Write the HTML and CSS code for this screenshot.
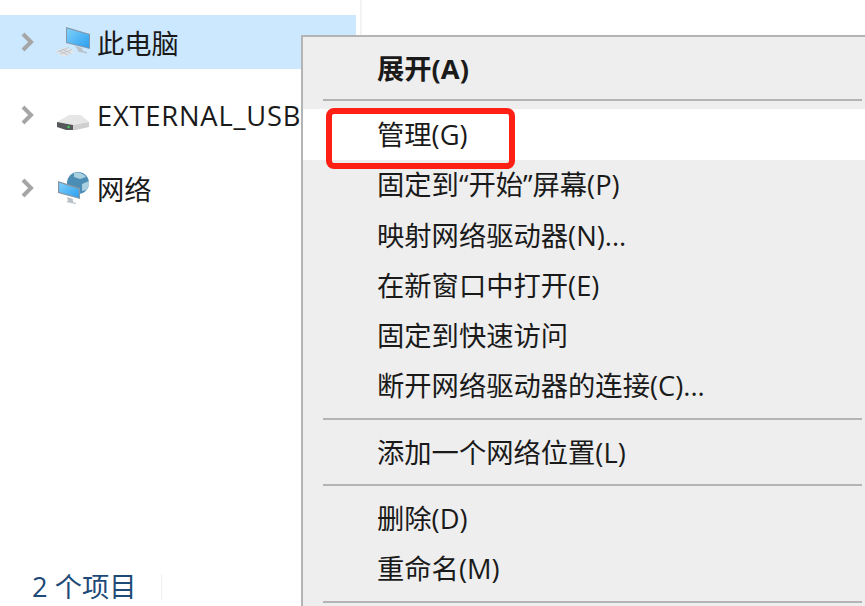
FILE: index.html
```html
<!DOCTYPE html>
<html lang="zh-CN">
<head>
  <meta charset="UTF-8">
  <title>此电脑</title>
  <link rel="stylesheet" href="styles.css">
</head>
<body>
  <div class="window">
    <div class="sidebar">
      <div class="tree">
        <div class="tree-row selected">
          <svg class="chevron" viewBox="0 0 14 22"><path d="M3 3l8 8-8 8" /></svg>
          <svg class="icon" viewBox="0 0 36 32">
            <defs>
              <linearGradient id="screen" x1="0" y1="0" x2="1" y2="1">
                <stop offset="0" stop-color="#7fd0fa"/>
                <stop offset="1" stop-color="#2b9ff0"/>
              </linearGradient>
            </defs>
            <path d="M20 20l7 2 1 3 4 1v1.500l-9-2 0-1.500z" fill="#b9c1c8"/>
            <path d="M11 1l24 7v15l-24-6z" fill="#8596a4"/>
            <path d="M12 2.500l22 6.300v13l-22-5.500z" fill="url(#screen)"/>
            <path d="M0 25l11-4 9 5-12 5z" fill="#e3e6e8"/>
            <path d="M4 24.500l9 4.500M7 23l9 4.500M2 26l12-4.500M5 28l12-4.500" stroke="#b9bdc1" stroke-width=".8" fill="none"/>
          </svg>
          <span class="label">此电脑</span>
        </div>
        <div class="tree-row">
          <svg class="chevron" viewBox="0 0 14 22"><path d="M3 3l8 8-8 8" /></svg>
          <svg class="icon" viewBox="0 0 36 32">
            <path d="M2 23l12-7h12l8 7-16 3z" fill="#e6e6e6"/>
            <path d="M18 26l16-3v5l-13 3h-3z" fill="#cfcfcf"/>
            <path d="M2 23l16 3v5h-7l-9-3z" fill="#55575b"/>
            <circle cx="13.500" cy="28" r="1.300" fill="#3fc455"/>
          </svg>
          <span class="label latin">EXTERNAL_USB</span>
        </div>
        <div class="tree-row">
          <svg class="chevron" viewBox="0 0 14 22"><path d="M3 3l8 8-8 8" /></svg>
          <svg class="icon" viewBox="0 0 36 32">
            <circle cx="23" cy="11" r="11" fill="#4b8db4"/>
            <path d="M19 1c4-1.500 9 0 12 4l-6 2-6-2zM27 12l7-3 0 5-3 4-4 1z" fill="#a9cfe0"/>
            <path d="M3 9l22 7v11l-22-6z" fill="#8596a4"/>
            <path d="M4.200 10.800l19.600 6.200v8.500l-19.600-5.500z" fill="url(#screen)"/>
            <path d="M12 25l6 2v3l3 1v1l-10-2 2-1z" fill="#b9c1c8"/>
          </svg>
          <span class="label">网络</span>
        </div>
      </div>
      <div class="statusbar"><span>2 个项目</span></div>
    </div>

    <div class="menu">
      <div class="menu-item bold">展开(A)</div>
      <div class="sep"></div>
      <div class="menu-item active">管理(G)</div>
      <div class="menu-item">固定到“开始”屏幕(P)</div>
      <div class="menu-item">映射网络驱动器(N)...</div>
      <div class="menu-item">在新窗口中打开(E)</div>
      <div class="menu-item">固定到快速访问</div>
      <div class="menu-item">断开网络驱动器的连接(C)...</div>
      <div class="sep"></div>
      <div class="menu-item">添加一个网络位置(L)</div>
      <div class="sep"></div>
      <div class="menu-item">删除(D)</div>
      <div class="menu-item">重命名(M)</div>
      <div class="sep"></div>
      <div class="callout"></div>
    </div>
  </div>
</body>
</html>
```
FILE: styles.css
```css
html, body {
  margin: 0;
  height: 100%;
  overflow: hidden;
  background: #fff;
}

body {
  font-family: "Open Sans", "Noto Sans CJK SC", sans-serif;
}

.window {
  display: flex;
  width: 865px;
  height: 606px;
  position: relative;
}

.sidebar {
  width: 362px;
  height: 606px;
  box-sizing: border-box;
  padding-top: 15px;
  border-right: 2px solid #f5f3f2;
  display: flex;
  flex-direction: column;
  justify-content: space-between;
}

.tree-row {
  display: flex;
  align-items: center;
  height: 54px;
  width: 356px;
  margin-bottom: 19px;
  padding-left: 20px;
  box-sizing: border-box;
  font-size: 27.300px;
  line-height: 54px;
  color: #1a1a1a;
  white-space: nowrap;
}

.tree-row.selected {
  background: #cce8ff;
}

.label {
  padding-top: 3px;
}

.label.latin {
  letter-spacing: 0.800px;
  padding-top: 1px;
}

.chevron {
  width: 14px;
  height: 22px;
  flex: none;
  fill: none;
  stroke: #a6a6a6;
  stroke-width: 4;
}

.icon {
  width: 36px;
  height: 32px;
  flex: none;
  margin-left: 21px;
  margin-right: 6px;
}

.statusbar {
  height: 38px;
  padding-left: 32px;
  font-size: 27.300px;
  line-height: 38px;
  color: #1e4a78;
}

.statusbar span {
  display: inline-block;
  padding-right: 24px;
  border-right: 1px solid #f0f0f0;
  line-height: 26px;
}

.menu {
  position: absolute;
  left: 301px;
  top: 35px;
  width: 564px;
  height: 571px;
  box-sizing: border-box;
  background: #eeeeee;
  border-left: 2px solid #b4b4b4;
  border-top: 2px solid #b4b4b4;
  padding-top: 6px;
}

.menu-item {
  height: 50.300px;
  line-height: 50px;
  padding-left: 74px;
  font-size: 27.300px;
  color: #1a1a1a;
  white-space: nowrap;
}

.menu-item.bold {
  font-weight: 700;
  line-height: 52px;
}

.menu-item.active {
  background: #fff;
  height: 51px;
  line-height: 52px;
}

.sep {
  height: 2px;
  margin: 6px 3px 8px 20px;
  background: #b4b4b4;
}

.callout {
  position: absolute;
  left: 23px;
  top: 71px;
  width: 189px;
  height: 61px;
  box-sizing: border-box;
  border: 6px solid #ff2015;
  border-radius: 8px;
}
```
